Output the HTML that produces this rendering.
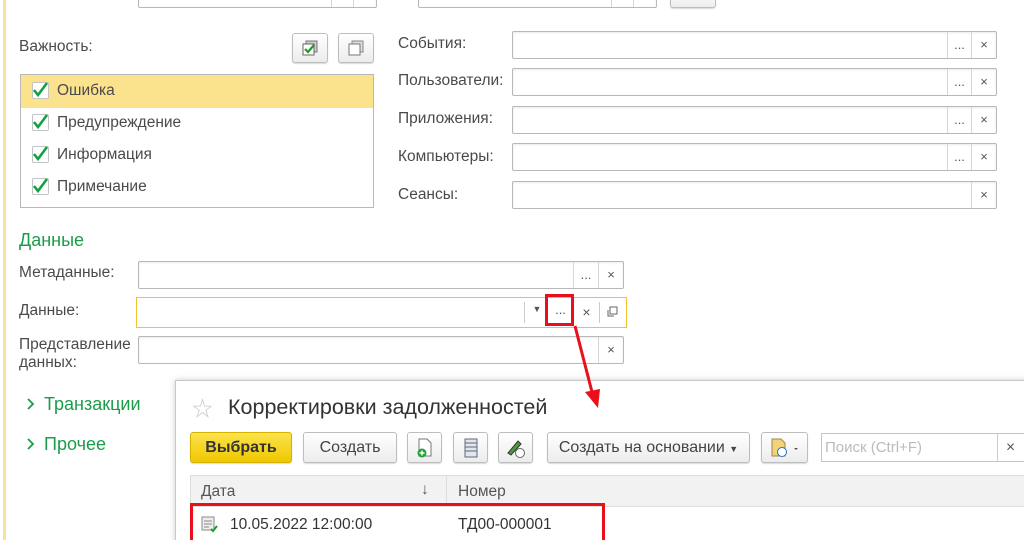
<!DOCTYPE html>
<html><head><meta charset="utf-8"><style>
*{box-sizing:border-box;margin:0;padding:0}
html,body{width:1024px;height:540px;overflow:hidden}
body{background:#fff;font-family:"Liberation Sans","Noto Sans CJK SC",sans-serif;font-size:15.5px;color:#404040;position:relative}
.a{position:absolute}
.f{position:absolute;border:1px solid #b8b8b8;border-radius:2px;background:#fff;box-shadow:inset 0 1px 2px rgba(0,0,0,.08)}
.c{position:absolute;top:0;bottom:0;border-left:1px solid #d6d6d6;color:#555;text-align:center;font-size:13px}
.lbl{position:absolute;font-size:15.5px;color:#4a4a4a}
.btn{position:absolute;border:1px solid #bdbdbd;border-radius:3px;background:linear-gradient(#fff,#ececec);box-shadow:0 1px 1px rgba(0,0,0,.15);text-align:center;color:#444;font-size:16px}
.cb{position:absolute;left:11px;width:17px;height:17px;border:1px solid #c4c4c4;border-radius:2px;background:#fff}
.g{color:#1a9c4a}
</style></head><body>
<div class="a" style="left:3px;top:0;width:3px;height:540px;background:#f5e39a"></div>

<div class="f" style="left:138px;top:-10px;width:239px;height:18px"><div class="c" style="left:192px;width:22px"></div><div class="c" style="left:214px;width:23px"></div></div>
<div class="f" style="left:418px;top:-10px;width:239px;height:18px"><div class="c" style="left:192px;width:22px"></div><div class="c" style="left:214px;width:23px"></div></div>
<div class="btn" style="left:670px;top:-10px;width:46px;height:18px"></div>

<div class="lbl" style="left:19px;top:38px">Важность:</div>
<div class="btn" style="left:292px;top:33px;width:36px;height:30px">
<svg width="20" height="20" style="margin-top:4px" viewBox="0 0 20 20"><rect x="6" y="3" width="11" height="11" fill="#ccc" stroke="#777"/><rect x="3" y="6" width="11" height="11" fill="#fff" stroke="#666"/><path d="M5 11l3 3 6-7" stroke="#1a9c2a" stroke-width="2.2" fill="none"/></svg></div>
<div class="btn" style="left:338px;top:33px;width:36px;height:30px">
<svg width="20" height="20" style="margin-top:4px" viewBox="0 0 20 20"><rect x="6" y="3" width="11" height="11" fill="#ddd" stroke="#888"/><rect x="3" y="6" width="11" height="11" fill="#fff" stroke="#777"/></svg></div>

<div class="a" style="left:20px;top:74px;width:354px;height:134px;border:1px solid #b8b8b8;background:#fff">
<div class="a" style="left:0;top:0;width:352px;height:33px;background:#fbe38d"></div>
<div class="cb" style="top:7px"></div><div class="cb" style="top:39px"></div><div class="cb" style="top:71px"></div><div class="cb" style="top:103px"></div>
<svg class="a" style="left:0;top:0" width="40" height="130"><g stroke="#12a040" stroke-width="2.6" fill="none"><path d="M13 15l4 5 9-12"/><path d="M13 47l4 5 9-12"/><path d="M13 79l4 5 9-12"/><path d="M13 111l4 5 9-12"/></g></svg>
<div class="lbl" style="left:36px;top:7px">Ошибка</div>
<div class="lbl" style="left:36px;top:39px">Предупреждение</div>
<div class="lbl" style="left:36px;top:71px">Информация</div>
<div class="lbl" style="left:36px;top:103px">Примечание</div>
</div>

<div class="lbl" style="left:398px;top:35px">События:</div>
<div class="lbl" style="left:398px;top:72px">Пользователи:</div>
<div class="lbl" style="left:398px;top:110px">Приложения:</div>
<div class="lbl" style="left:398px;top:148px">Компьютеры:</div>
<div class="lbl" style="left:398px;top:186px">Сеансы:</div>
<div class="f" style="left:512px;top:31px;width:485px;height:28px"><div class="c" style="left:434px;width:24px;line-height:26px">...</div><div class="c" style="left:458px;width:25px;line-height:26px">×</div></div>
<div class="f" style="left:512px;top:68px;width:485px;height:28px"><div class="c" style="left:434px;width:24px;line-height:26px">...</div><div class="c" style="left:458px;width:25px;line-height:26px">×</div></div>
<div class="f" style="left:512px;top:106px;width:485px;height:28px"><div class="c" style="left:434px;width:24px;line-height:26px">...</div><div class="c" style="left:458px;width:25px;line-height:26px">×</div></div>
<div class="f" style="left:512px;top:143px;width:485px;height:28px"><div class="c" style="left:434px;width:24px;line-height:26px">...</div><div class="c" style="left:458px;width:25px;line-height:26px">×</div></div>
<div class="f" style="left:512px;top:181px;width:485px;height:28px"><div class="c" style="left:458px;width:25px;line-height:26px">×</div></div>

<div class="a g" style="left:19px;top:230px;font-size:18px">Данные</div>
<div class="lbl" style="left:19px;top:264px">Метаданные:</div>
<div class="lbl" style="left:19px;top:302px">Данные:</div>
<div class="lbl" style="left:19px;top:336px;line-height:18px">Представление<br>данных:</div>
<div class="f" style="left:138px;top:261px;width:486px;height:28px"><div class="c" style="left:434px;width:25px;line-height:26px">...</div><div class="c" style="left:459px;width:25px;line-height:26px">×</div></div>
<div class="a" style="left:136px;top:297px;width:491px;height:31px;border:1.5px solid #f2c12e;background:#fff">
<div class="a" style="left:387px;top:4px;height:21px;border-left:1px solid #ccc"></div>
<div class="a" style="left:391px;top:6px;width:18px;font-size:9px;text-align:center;color:#555">▼</div>
<div class="a" style="left:411px;top:4px;width:25px;text-align:center;color:#555;font-size:13px">...</div>
<div class="a" style="left:437px;top:4px;width:25px;text-align:center;color:#555;line-height:21px;font-size:14px">×</div>
<div class="a" style="left:462px;top:4px;width:25px;height:21px;border-left:1px solid #ccc"><svg width="24" height="21" viewBox="0 0 24 21"><rect x="10" y="5" width="7" height="7" fill="none" stroke="#666"/><path d="M8 8v6h6" fill="none" stroke="#666"/></svg></div>
</div>
<div class="a" style="left:545px;top:294px;width:29px;height:32px;border:3px solid #e8101a"></div>
<div class="f" style="left:138px;top:336px;width:486px;height:28px"><div class="c" style="left:459px;width:25px;line-height:26px">×</div></div>

<svg class="a" style="left:24px;top:396px" width="12" height="60" viewBox="0 0 12 60"><path d="M4 3l5 5-5 5M4 43l5 5-5 5" stroke="#1a9c4a" stroke-width="1.8" fill="none"/></svg>
<div class="a g" style="left:44px;top:394px;font-size:18px">Транзакции</div>
<div class="a g" style="left:44px;top:434px;font-size:18px">Прочее</div>

<div class="a" style="left:175px;top:380px;width:860px;height:170px;border:1px solid #c8c8c8;background:#fff;box-shadow:0 0 6px rgba(0,0,0,.2)">
<div class="a" style="left:16px;top:12px;font-size:21px;color:#c8c8c8">☆</div>
<div class="a" style="left:52px;top:14px;font-size:21.5px;color:#333">Корректировки задолженностей</div>
<div class="btn" style="left:14px;top:51px;width:102px;height:31px;background:linear-gradient(#fbe24a,#f0c800);border-color:#d5b300;font-weight:bold;line-height:29px;color:#333">Выбрать</div>
<div class="btn" style="left:127px;top:51px;width:94px;height:31px;line-height:29px">Создать</div>
<div class="btn" style="left:231px;top:51px;width:35px;height:31px"><svg width="20" height="22" style="margin-top:4px" viewBox="0 0 20 22"><path d="M4 2h8l4 4v13H4z" fill="#fff" stroke="#777"/><circle cx="7" cy="16" r="4.5" fill="#22a03a"/><path d="M7 13.5v5M4.5 16h5" stroke="#fff" stroke-width="1.5"/></svg></div>
<div class="btn" style="left:277px;top:51px;width:35px;height:31px"><svg width="14" height="20" style="margin-top:5px" viewBox="0 0 14 20"><rect x="1" y="1" width="12" height="18" fill="#dfe6ee" stroke="#667"/><path d="M1 5h12M1 9h12M1 13h12" stroke="#667"/></svg></div>
<div class="btn" style="left:322px;top:51px;width:35px;height:31px"><svg width="22" height="22" style="margin-top:4px" viewBox="0 0 22 22"><path d="M3 16L13 4l3 3L6 18z" fill="#4a9c3a" stroke="#333"/><circle cx="15" cy="16" r="4.5" fill="#fff" stroke="#666"/></svg></div>
<div class="btn" style="left:371px;top:51px;width:203px;height:31px;line-height:29px">Создать на основании <span style="font-size:9px">▼</span></div>
<div class="btn" style="left:585px;top:51px;width:47px;height:31px;text-align:left;padding-left:8px"><svg width="30" height="22" style="margin-top:4px" viewBox="0 0 30 22"><path d="M2 2h9l4 4v13H2z" fill="#f2d27a" stroke="#a0874a"/><circle cx="12" cy="15" r="4.5" fill="#fff" stroke="#2a6dc0"/><path d="M24 11l2 2 2-2z" fill="#555"/></svg></div>
<div class="a" style="left:645px;top:52px;width:204px;height:29px;border:1px solid #c4c4c4;background:#fff;font-size:15px;color:#bbb;padding:5px 3px">Поиск (Ctrl+F)</div>
<div class="a" style="left:821px;top:52px;width:40px;height:29px;border-left:1px solid #ccc;border-top:1px solid #c4c4c4;border-bottom:1px solid #c4c4c4;color:#555;padding:5px 8px">×</div>
<div class="a" style="left:14px;top:94px;width:850px;height:32px;background:#f2f2f2;border:1px solid #ddd"></div>
<div class="a" style="left:270px;top:94px;height:32px;border-left:1px solid #ddd"></div>
<div class="a" style="left:25px;top:102px;color:#555">Дата</div>
<div class="a" style="left:245px;top:100px;color:#555">↓</div>
<div class="a" style="left:282px;top:102px;color:#555">Номер</div>
<svg class="a" style="left:25px;top:135px" width="18" height="18" viewBox="0 0 18 18"><rect x="1" y="1" width="12" height="13" fill="#eee" stroke="#888"/><path d="M3 5h8M3 8h8M3 11h5" stroke="#888"/><path d="M10 13l2 2 4-5" stroke="#1a9c2a" stroke-width="2" fill="none"/></svg>
<div class="a" style="left:54px;top:135px;color:#333">10.05.2022 12:00:00</div>
<div class="a" style="left:282px;top:135px;color:#333">ТД00-000001</div>
</div>
<div class="a" style="left:190px;top:503px;width:415px;height:50px;border:3px solid #e8101a"></div>
<svg class="a" style="left:0;top:0" width="1024" height="540"><path d="M575 326L592 392" stroke="#e8101a" stroke-width="3"/><path d="M585 392l13 16 2-19z" fill="#e8101a"/></svg>
</body></html>
